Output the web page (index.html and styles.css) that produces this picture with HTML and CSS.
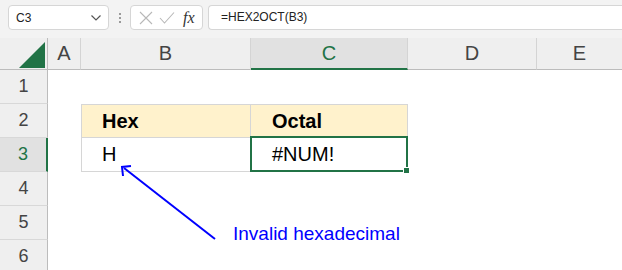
FILE: index.html
```html
<!DOCTYPE html>
<html lang="en">
<head>
    <meta charset="UTF-8">
    <title>HEX2OCT</title>
    <link rel="stylesheet" href="styles.css">
</head>
<body>
    <div class="toolbar">
        <div class="namebox">
            <span>C3</span>
            <svg width="12" height="8" viewBox="0 0 12 8"><polyline points="1.5,1.5 6,6 10.5,1.5" fill="none" stroke="#555" stroke-width="1.2"/></svg>
        </div>
        <div class="dots"><i></i><i></i><i></i></div>
        <div class="fxbox">
            <svg width="14" height="14" viewBox="0 0 14 14"><path d="M1 1 L13 13 M13 1 L1 13" stroke="#b8b8b8" stroke-width="1.1"/></svg>
            <svg width="16" height="14" viewBox="0 0 16 14"><polyline points="1,7 5.5,12 15,1.5" fill="none" stroke="#b8b8b8" stroke-width="1.1"/></svg>
            <span class="fx">fx</span>
        </div>
        <div class="formula">=HEX2OCT(B3)</div>
    </div>

    <div class="sheet">
        <div class="corner"><svg width="26" height="26" viewBox="0 0 26 26"><polygon points="0,26 26,26 26,0" fill="#217346"/></svg></div>
        <div class="colhead">A</div>
        <div class="colhead">B</div>
        <div class="colhead active">C</div>
        <div class="colhead">D</div>
        <div class="colhead last">E</div>

        <div class="rowhead">1</div>
        <div class="cell"></div><div class="cell"></div><div class="cell"></div><div class="cell"></div><div class="cell"></div>

        <div class="rowhead">2</div>
        <div class="cell"></div>
        <div class="cell th first">Hex</div>
        <div class="cell th">Octal</div>
        <div class="cell"></div><div class="cell"></div>

        <div class="rowhead active">3</div>
        <div class="cell"></div>
        <div class="cell td first">H</div>
        <div class="cell td selected">#NUM!</div>
        <div class="cell"></div><div class="cell"></div>

        <div class="rowhead">4</div>
        <div class="cell"></div><div class="cell"></div><div class="cell"></div><div class="cell"></div><div class="cell"></div>
        <div class="rowhead">5</div>
        <div class="cell"></div><div class="cell"></div><div class="cell"></div><div class="cell"></div><div class="cell"></div>
        <div class="rowhead">6</div>
        <div class="cell"></div><div class="cell"></div><div class="cell"></div><div class="cell"></div><div class="cell"></div>

        <svg class="arrow" width="622" height="232" viewBox="0 38 622 232">
            <line x1="215" y1="239" x2="124" y2="168" stroke="#0000ff" stroke-width="2"/>
            <polyline points="123,176 122,167 131,166" fill="none" stroke="#0000ff" stroke-width="2"/>
        </svg>
        <div class="note">Invalid hexadecimal</div>
    </div>
</body>
</html>
```

FILE: styles.css
```css
body {
    margin: 0;
    width: 622px;
    height: 270px;
    overflow: hidden;
    background: #fff;
    font-family: "Liberation Sans", Arial, sans-serif;
}

.toolbar {
    height: 38px;
    background: #f3f3f3;
    display: flex;
    align-items: flex-start;
    padding: 5px 0 0 8px;
    box-sizing: border-box;
}

.namebox {
    width: 101px;
    height: 25px;
    box-sizing: border-box;
    background: #fff;
    border: 1px solid #d6d6d6;
    border-radius: 4px;
    display: flex;
    align-items: center;
    justify-content: space-between;
    padding: 0 6px 0 7px;
    font-size: 12px;
    color: #222;
}

.dots {
    width: 21px;
    height: 25px;
    display: flex;
    flex-direction: column;
    align-items: center;
    justify-content: center;
    gap: 2px;
}

.dots i {
    width: 2px;
    height: 2px;
    background: #9a9a9a;
}

.fxbox {
    width: 73px;
    height: 25px;
    box-sizing: border-box;
    background: #fff;
    border: 1px solid #d6d6d6;
    border-radius: 4px;
    display: flex;
    align-items: center;
    padding: 0 0 0 8px;
    gap: 6px;
}

.fx {
    font-family: "Liberation Serif", serif;
    font-style: italic;
    font-size: 16px;
    color: #333;
    margin-left: 2px;
}

.formula {
    margin-left: 5px;
    flex: 1;
    height: 25px;
    box-sizing: border-box;
    background: #fff;
    border: 1px solid #d6d6d6;
    border-right: none;
    border-radius: 4px 0 0 4px;
    padding-left: 12px;
    line-height: 23px;
    font-size: 12px;
    color: #222;
}

.sheet {
    position: relative;
    display: grid;
    grid-template-columns: 48px 33px 170px 157px 129px 85px;
    grid-template-rows: 32px 34px 34px 34px 34px 34px 34px;
}

.corner {
    background: #efefef;
    border-right: 1px solid #bcbcbc;
    border-bottom: 1px solid #bcbcbc;
    box-sizing: border-box;
    padding: 4px 0 0 19px;
}

.corner svg {
    display: block;
}

.colhead {
    background: #efefef;
    border-right: 1px solid #d4d4d4;
    border-bottom: 1px solid #bcbcbc;
    box-sizing: border-box;
    display: flex;
    align-items: center;
    justify-content: center;
    font-size: 20px;
    color: #444;
}

.colhead.last {
    border-right: none;
}

.colhead.active {
    background: #e1e1e1;
    color: #217346;
    border-bottom: 2px solid #217346;
}

.rowhead {
    background: #efefef;
    border-right: 1px solid #bcbcbc;
    border-bottom: 1px solid #d8d8d8;
    box-sizing: border-box;
    display: flex;
    align-items: center;
    justify-content: center;
    font-size: 18px;
    color: #444;
}

.rowhead.active {
    background: #e1e1e1;
    color: #217346;
    border-right: 2px solid #217346;
}

.cell {
    box-sizing: border-box;
}

.th,
.td {
    border-right: 1px solid #d6d6d6;
    border-bottom: 1px solid #d6d6d6;
    padding-left: 20px;
    display: flex;
    align-items: center;
    font-size: 20px;
    color: #000;
}

.th {
    background: #fff2cc;
    border-top: 1px solid #d6d6d6;
    font-weight: bold;
}

.th.first,
.td.first {
    border-left: 1px solid #d6d6d6;
    padding-left: 20px;
}

.th:not(.first),
.td:not(.first) {
    padding-left: 21px;
}

.selected {
    position: relative;
}

.selected::after {
    content: "";
    position: absolute;
    left: -1px;
    top: -2px;
    right: -1px;
    bottom: -1px;
    border: 2px solid #217346;
}

.selected::before {
    content: "";
    position: absolute;
    right: -3px;
    bottom: -3px;
    width: 5px;
    height: 5px;
    background: #217346;
    border: 1px solid #fff;
    z-index: 1;
}

.arrow {
    position: absolute;
    left: 0;
    top: 0;
    pointer-events: none;
}

.note {
    position: absolute;
    left: 233px;
    top: 185px;
    font-size: 19px;
    color: #0000ff;
}
```
